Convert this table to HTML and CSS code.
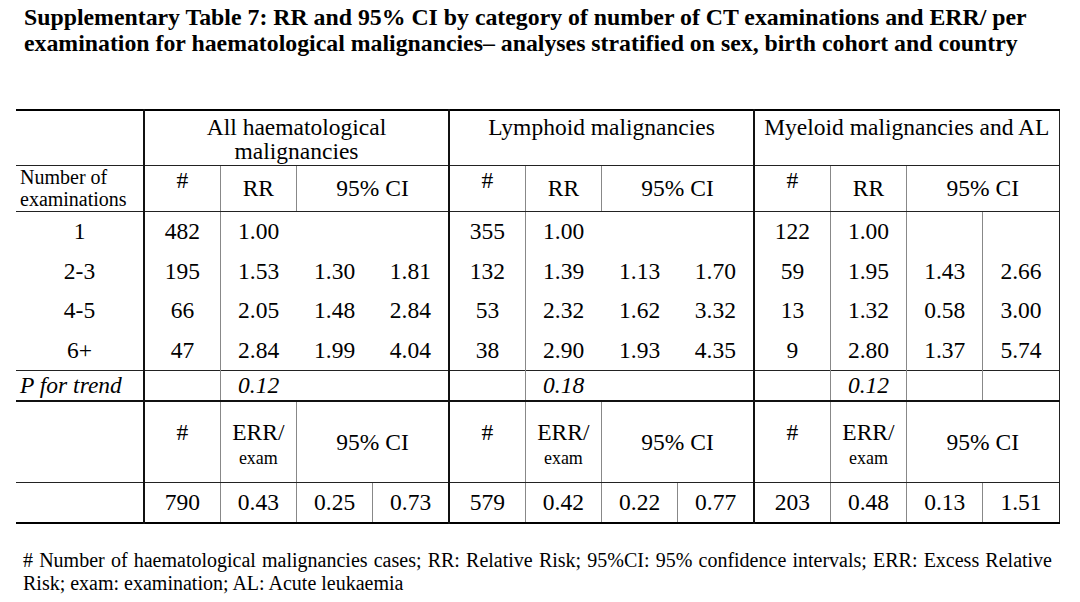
FILE: index.html
```html
<!DOCTYPE html>
<html>
<head>
<meta charset="utf-8">
<link rel="stylesheet" href="styles.css">
</head>
<body>
<div class="page">
  <h1 class="title">Supplementary Table 7: RR and 95% CI by category of number of CT examinations and ERR/ per examination for haematological malignancies– analyses stratified on sex, birth cohort and country</h1>
  <table class="tbl">
    <colgroup>
      <col class="c-label">
      <col class="c"><col class="c"><col class="c"><col class="c">
      <col class="c"><col class="c"><col class="c"><col class="c">
      <col class="c"><col class="c"><col class="c"><col class="c">
    </colgroup>
    <tr class="r-h1">
      <td></td>
      <td colspan="4" class="bk grp">All haematological<br>malignancies</td>
      <td colspan="4" class="bk grp">Lymphoid malignancies</td>
      <td colspan="4" class="bk grp">Myeloid malignancies and AL</td>
    </tr>
    <tr class="r-h2">
      <td class="lbl small">Number of<br>examinations</td>
      <td class="bk hash">#</td><td class="bl">RR</td><td colspan="2" class="bl">95% CI</td>
      <td class="bk hash">#</td><td class="bl">RR</td><td colspan="2" class="bl">95% CI</td>
      <td class="bk hash">#</td><td class="bl">RR</td><td colspan="2" class="bl">95% CI</td>
    </tr>
    <tr class="r-d">
      <td>1</td>
      <td class="bk">482</td><td class="bl">1.00</td><td></td><td></td>
      <td class="bk">355</td><td class="bl">1.00</td><td></td><td></td>
      <td class="bk">122</td><td class="bl">1.00</td><td class="bl"></td><td class="bl"></td>
    </tr>
    <tr class="r-d">
      <td>2-3</td>
      <td class="bk">195</td><td class="bl">1.53</td><td>1.30</td><td>1.81</td>
      <td class="bk">132</td><td class="bl">1.39</td><td>1.13</td><td>1.70</td>
      <td class="bk">59</td><td class="bl">1.95</td><td class="bl">1.43</td><td class="bl">2.66</td>
    </tr>
    <tr class="r-d">
      <td>4-5</td>
      <td class="bk">66</td><td class="bl">2.05</td><td>1.48</td><td>2.84</td>
      <td class="bk">53</td><td class="bl">2.32</td><td>1.62</td><td>3.32</td>
      <td class="bk">13</td><td class="bl">1.32</td><td class="bl">0.58</td><td class="bl">3.00</td>
    </tr>
    <tr class="r-d">
      <td>6+</td>
      <td class="bk">47</td><td class="bl">2.84</td><td>1.99</td><td>4.04</td>
      <td class="bk">38</td><td class="bl">2.90</td><td>1.93</td><td>4.35</td>
      <td class="bk">9</td><td class="bl">2.80</td><td class="bl">1.37</td><td class="bl">5.74</td>
    </tr>
    <tr class="r-p">
      <td class="lbl it">P for trend</td>
      <td class="bk"></td><td class="bl it">0.12</td><td></td><td></td>
      <td class="bk"></td><td class="bl it">0.18</td><td></td><td></td>
      <td class="bk"></td><td class="bl it">0.12</td><td class="bl"></td><td class="bl"></td>
    </tr>
    <tr class="r-e">
      <td></td>
      <td class="bk hash">#</td><td class="bl err"><span class="err-t">ERR/</span><span class="exam">exam</span></td><td colspan="2" class="bl">95% CI</td>
      <td class="bk hash">#</td><td class="bl err"><span class="err-t">ERR/</span><span class="exam">exam</span></td><td colspan="2" class="bl">95% CI</td>
      <td class="bk hash">#</td><td class="bl err"><span class="err-t">ERR/</span><span class="exam">exam</span></td><td colspan="2" class="bl">95% CI</td>
    </tr>
    <tr class="r-l">
      <td></td>
      <td class="bk">790</td><td class="bl">0.43</td><td class="bl">0.25</td><td class="bl">0.73</td>
      <td class="bk">579</td><td class="bl">0.42</td><td class="bl">0.22</td><td class="bl">0.77</td>
      <td class="bk">203</td><td class="bl">0.48</td><td class="bl">0.13</td><td class="bl">1.51</td>
    </tr>
  </table>
  <p class="note"># Number of haematological malignancies cases; RR: Relative Risk; 95%CI: 95% confidence intervals; ERR: Excess Relative Risk; exam: examination; AL: Acute leukaemia</p>
</div>
</body>
</html>
```

FILE: styles.css
```css
html, body {
  margin: 0;
  padding: 0;
  background: #fff;
}

.page {
  width: 1080px;
  height: 602px;
  padding: 4px 0 0 16px;
  box-sizing: border-box;
  font-family: "Liberation Serif", Tinos, "Times New Roman", Times, serif;
  color: #000;
  overflow: hidden;
}

.title {
  margin: 0 0 0 8px;
  width: 1040px;
  font-size: 23.8px;
  line-height: 26px;
  font-weight: bold;
}

.tbl {
  margin-top: 53px;
  width: 1043px;
  table-layout: fixed;
  border-collapse: collapse;
  font-size: 23.5px;
  border-top: 2px solid #000;
  border-bottom: 2px solid #000;
  border-right: 1.5px solid #222;
}

.c-label { width: 128px; }
.c { width: 76.25px; }

.tbl td {
  padding: 0;
  text-align: center;
  vertical-align: middle;
  line-height: 24px;
  white-space: nowrap;
}

.tbl .bk { border-left: 2px solid #111; }
.tbl .bl { border-left: 1px solid #888; }

.r-h1 { height: 55px; }
.r-h1 td {
  vertical-align: top;
  padding-top: 4px;
  border-bottom: 1px solid #222;
}

.r-h2 { height: 46px; }
.r-h2 td {
  border-bottom: 1px solid #222;
}

.r-h2 td.hash {
  vertical-align: top;
  padding-top: 2px;
}

.tbl td.lbl {
  text-align: left;
  padding-left: 4px;
}

.tbl td.small {
  font-size: 20px;
  line-height: 22px;
}

.r-d { height: 39.75px; }

.r-p { height: 31px; }
.r-p td {
  border-top: 1px solid #222;
}

.it { font-style: italic; }

.r-e { height: 81px; }
.r-e td {
  border-top: 2px solid #111;
  border-bottom: 1px solid #222;
}
.r-e td.hash,
.r-e td.err {
  vertical-align: top;
  padding-top: 18px;
}
.err-t {
  display: block;
  line-height: 24px;
}
.exam {
  display: block;
  margin-top: 2px;
  font-size: 18px;
  line-height: 24px;
}

.r-l { height: 41px; }

.note {
  margin: 25px 0 0 7px;
  width: 1029px;
  font-size: 20px;
  line-height: 23px;
  text-align: justify;
}
```
